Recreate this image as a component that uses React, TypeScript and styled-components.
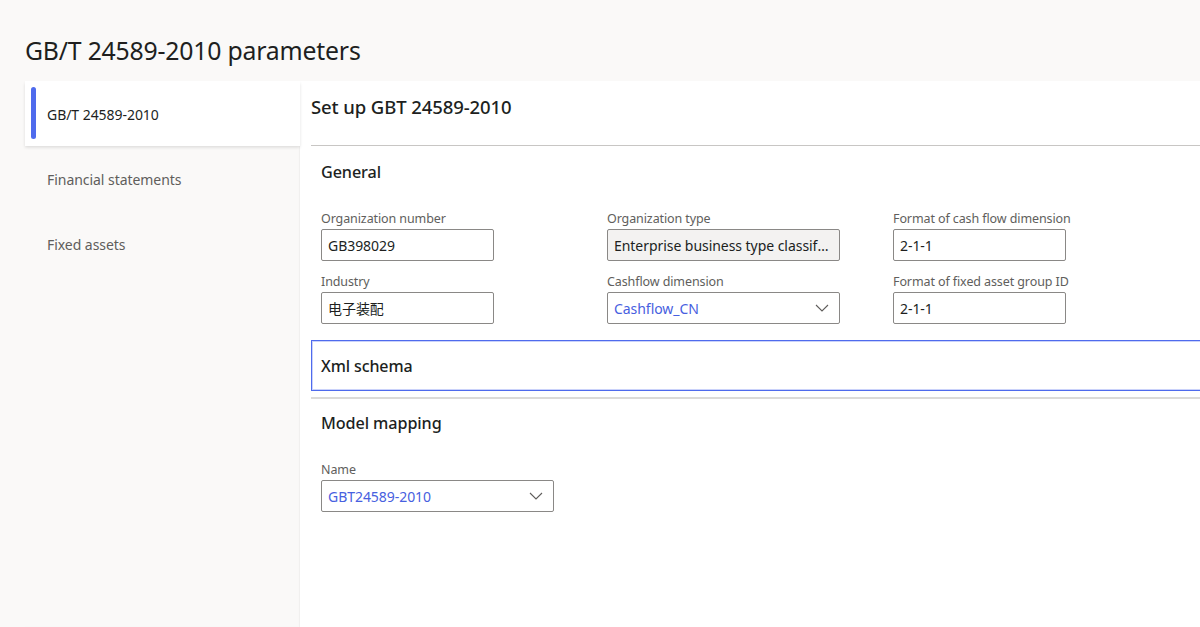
import React from "react";
import styled, { createGlobalStyle } from "styled-components";

const GlobalStyle = createGlobalStyle`
  html, body { margin: 0; padding: 0; }
  body {
    background: #faf9f8;
    font-family: "Segoe UI", "Noto Sans", "Noto Sans CJK SC", sans-serif;
    color: #201f1e;
    -webkit-font-smoothing: antialiased;
  }
`;

const Page = styled.div`
  width: 1200px;
  height: 627px;
  overflow: hidden;
  display: flex;
  flex-direction: column;
  padding-left: 25px;
  box-sizing: border-box;
`;

const Title = styled.h1`
  margin: 0;
  height: 81px;
  display: flex;
  align-items: center;
  padding-top: 19px;
  box-sizing: border-box;
  font-size: 24.8px;
  font-weight: 400;
  letter-spacing: -0.2px;
  color: #201f1e;
`;

const Body = styled.div`
  flex: 1;
  display: flex;
  min-height: 0;
`;

const Nav = styled.nav`
  width: 275px;
  flex: none;
  display: flex;
  flex-direction: column;
  box-shadow: inset -1px 0 1px rgba(0, 0, 0, 0.04);
`;

const NavItem = styled.div<{ $active?: boolean }>`
  position: relative;
  height: 65px;
  display: flex;
  align-items: center;
  padding: 2px 0 0 22px;
  box-sizing: border-box;
  font-size: 14px;
  letter-spacing: -0.05px;
  color: ${(p) => (p.$active ? "#201f1e" : "#605e5c")};
  background: ${(p) => (p.$active ? "#ffffff" : "transparent")};
  box-shadow: ${(p) => (p.$active ? "0 1.5px 3px rgba(0,0,0,0.12)" : "none")};
  z-index: ${(p) => (p.$active ? 1 : 0)};
`;

const ActiveBar = styled.span`
  position: absolute;
  left: 6px;
  top: 6px;
  bottom: 7px;
  width: 5px;
  border-radius: 3px;
  background: #4f6bed;
`;

const Main = styled.main`
  flex: 1;
  min-width: 0;
  overflow: hidden;
  background: #ffffff;
  display: flex;
  flex-direction: column;
  padding-left: 11px;
`;

const Header = styled.div`
  height: 65px;
  display: flex;
  align-items: center;
  padding-bottom: 14px;
  box-sizing: border-box;
  border-bottom: 1px solid #c8c6c4;
  font-size: 18.5px;
  font-weight: 500;
  letter-spacing: -0.1px;
  color: #201f1e;
`;

const Section = styled.section`
  padding: 15px 0 0 10px;
`;

const SectionTitle = styled.div`
  height: 22px;
  display: flex;
  align-items: center;
  font-size: 16.2px;
  font-weight: 500;
  letter-spacing: -0.1px;
  color: #201f1e;
`;

const FieldGrid = styled.div`
  margin-top: 28px;
  display: grid;
  grid-template-columns: repeat(3, 286px);
  row-gap: 13px;
`;

const Field = styled.div`
  display: flex;
  flex-direction: column;
  gap: 2px;
`;

const Label = styled.label`
  height: 16px;
  line-height: 16px;
  font-size: 12.5px;
  letter-spacing: -0.1px;
  color: #605e5c;
`;

const InputBox = styled.div<{ $w: number; $readonly?: boolean; $link?: boolean }>`
  width: ${(p) => p.$w}px;
  height: 32px;
  box-sizing: border-box;
  border: 1px solid #8a8886;
  border-radius: 2px;
  background: ${(p) => (p.$readonly ? "#f3f2f1" : "#ffffff")};
  display: flex;
  align-items: center;
  padding: 0 10px 0 6px;
  font-size: 14px;
  letter-spacing: -0.05px;
  color: ${(p) => (p.$link ? "#4760e0" : "#201f1e")};
  white-space: nowrap;
  overflow: hidden;
`;

const InputText = styled.span`
  flex: 1;
  min-width: 0;
  overflow: hidden;
  text-overflow: ellipsis;
`;

const Chevron = styled.svg`
  flex: none;
  width: 14px;
  height: 8px;
  margin-left: 6px;
`;

const CollapsedSection = styled.div`
  margin-top: 16px;
  margin-right: -6px;
  height: 51px;
  box-sizing: border-box;
  border: 1px solid #4f6bed;
  box-shadow: inset 0 0 0 1px rgba(79, 107, 237, 0.3);
  display: flex;
  align-items: center;
  padding-left: 9px;
  font-size: 16px;
  font-weight: 500;
  letter-spacing: -0.1px;
  color: #201f1e;
`;

const Divider = styled.div`
  margin-top: 6px;
  height: 2px;
  background: #dcdbd9;
`;

const ModelSection = styled(Section)`
  padding-top: 13px;
`;

const ModelGrid = styled(FieldGrid)`
  margin-top: 28px;
`;

const ChevronIcon = () => (
  <Chevron viewBox="0 0 14 8">
    <path d="M1 1 L7 7 L13 1" fill="none" stroke="#605e5c" strokeWidth="1.1" />
  </Chevron>
);

type FieldProps = {
  label: string;
  value: string;
  width: number;
  readonly?: boolean;
  select?: boolean;
};

const FormField = ({ label, value, width, readonly, select }: FieldProps) => (
  <Field>
    <Label>{label}</Label>
    <InputBox $w={width} $readonly={readonly} $link={select}>
      <InputText>{value}</InputText>
      {select && <ChevronIcon />}
    </InputBox>
  </Field>
);

export default function App() {
  return (
    <>
      <GlobalStyle />
      <Page>
        <Title>GB/T 24589-2010 parameters</Title>
        <Body>
          <Nav>
            <NavItem $active>
              <ActiveBar />
              GB/T 24589-2010
            </NavItem>
            <NavItem>Financial statements</NavItem>
            <NavItem>Fixed assets</NavItem>
          </Nav>
          <Main>
            <Header>Set up GBT 24589-2010</Header>
            <Section>
              <SectionTitle>General</SectionTitle>
              <FieldGrid>
                <FormField label="Organization number" value="GB398029" width={173} />
                <FormField
                  label="Organization type"
                  value="Enterprise business type classification"
                  width={233}
                  readonly
                />
                <FormField label="Format of cash flow dimension" value="2-1-1" width={173} />
                <FormField label="Industry" value="电子装配" width={173} />
                <FormField label="Cashflow dimension" value="Cashflow_CN" width={233} select />
                <FormField label="Format of fixed asset group ID" value="2-1-1" width={173} />
              </FieldGrid>
            </Section>
            <CollapsedSection>Xml schema</CollapsedSection>
            <Divider />
            <ModelSection>
              <SectionTitle>Model mapping</SectionTitle>
              <ModelGrid>
                <FormField label="Name" value="GBT24589-2010" width={233} select />
              </ModelGrid>
            </ModelSection>
          </Main>
        </Body>
      </Page>
    </>
  );
}
